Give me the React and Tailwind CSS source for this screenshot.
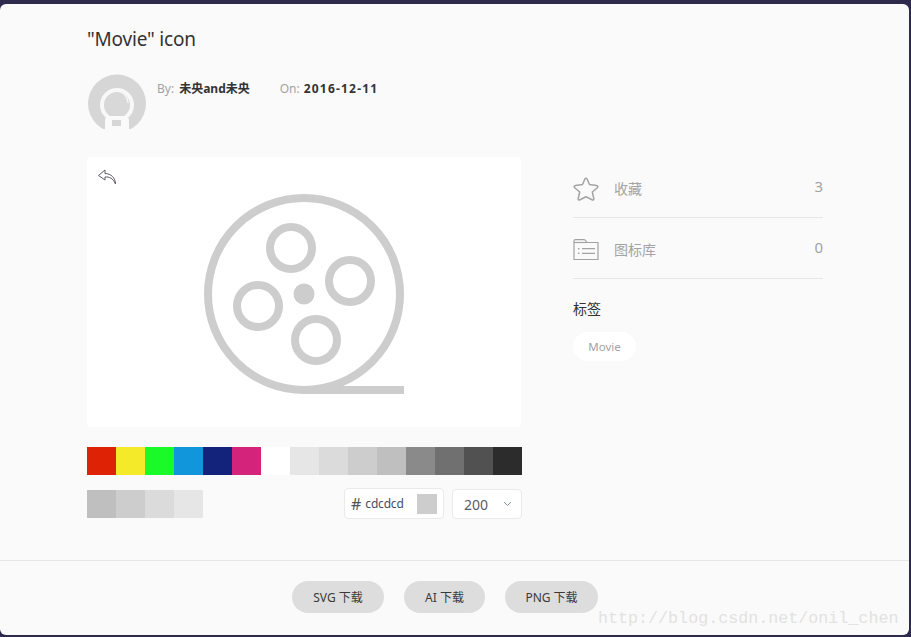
import React from 'react'

const font = { fontFamily: '"Noto Sans", "Noto Sans CJK SC", sans-serif' }

const colors = ['bg-[#dd2206]', 'bg-[#f4ea2a]', 'bg-[#1afa29]', 'bg-[#1296db]', 'bg-[#13227a]', 'bg-[#d4237a]', 'bg-[#ffffff]', 'bg-[#e6e6e6]', 'bg-[#dbdbdb]', 'bg-[#cdcdcd]', 'bg-[#bfbfbf]', 'bg-[#8a8a8a]', 'bg-[#707070]', 'bg-[#515151]', 'bg-[#2c2c2c]']
const recent = ['bg-[#bfbfbf]', 'bg-[#cdcdcd]', 'bg-[#dbdbdb]', 'bg-[#e6e6e6]']

function Avatar() {
  return (
    <svg width="58" height="58" viewBox="0 0 58 58" className="ml-[1px] shrink-0">
      <circle cx="29" cy="29.5" r="29" fill="#d6d6d6" />
      <rect x="0" y="55" width="58" height="3" fill="#fafafa" />
      <circle cx="29" cy="31" r="15" fill="#d8d8d8" stroke="#f8f8f8" strokeWidth="4" />
      <path d="M32 17.5A13 13 0 0 1 40 29" fill="none" stroke="#f4f4f4" strokeWidth="1.5" />
      <path d="M17 58V47Q17 42 22 42H36Q41 42 41 47V58Z" fill="#fafafa" />
      <rect x="24" y="46" width="9" height="6" fill="#d6d6d6" />
    </svg>
  )
}

function MovieIcon() {
  return (
    <svg width="200" height="200" viewBox="0 0 200 200" fill="none" stroke="#cdcdcd" strokeWidth="8">
      <circle cx="100" cy="100" r="96" />
      <circle cx="87" cy="54" r="21" />
      <circle cx="146" cy="87" r="21" />
      <circle cx="54" cy="112" r="21" />
      <circle cx="112" cy="146" r="21" />
      <circle cx="100" cy="100" r="10.5" fill="#cdcdcd" stroke="none" />
      <path d="M100 196H200" />
    </svg>
  )
}

function BackIcon() {
  return (
    <svg width="20" height="16" viewBox="0 0 20 16" fill="none" stroke="#5f5868" strokeWidth="1">
      <path d="M8 1L1.5 6.5L8 11V8C12 7.6 16 9 18.5 15C18.5 9 14 4.5 8 4.5Z" strokeLinejoin="round" />
    </svg>
  )
}

function StarIcon() {
  return (
    <svg width="26" height="24" viewBox="0 0 26 24" fill="none" stroke="#a3a3a3" strokeWidth="1.5" strokeLinejoin="round">
      <path d="M11.8 2.2Q13 .4 14.2 2.2L16.5 7.5L23.5 8.5Q25.8 9 24.3 10.8L19.3 15L20.8 21.5Q21 23.5 19 22.7L13 19.8L7 22.7Q5 23.5 5.2 21.5L6.7 15L1.7 10.8Q.2 9 2.5 8.5L9.5 7.5Z" />
    </svg>
  )
}

function FolderIcon() {
  return (
    <svg width="26" height="22" viewBox="0 0 26 22" fill="none" stroke="#a3a3a3" strokeWidth="1.2">
      <path d="M1 20.5V2Q1 .7 2.5 .7H11Q12.5 .7 14 3.5H25V20.5Z" />
      <path d="M1 3.5H14" />
      <path d="M5 9.7H6.5M5 14.3H6.5" strokeWidth="1.5" />
      <path d="M9 9.7H22M9 14.3H22" />
    </svg>
  )
}

function StatRow({ icon, label, count }) {
  return (
    <div className="flex h-[61px] items-center border-b border-[#e6e6e6] pt-[4px]">
      <div className="flex w-[41px] justify-start">{icon}</div>
      <span className="mb-[2px] flex-1 text-[14px] text-[#a3a3a3]">{label}</span>
      <span className="mb-[5px] text-[15px] text-[#a3a3a3]">{count}</span>
    </div>
  )
}

function DownloadBtn({ label, className }) {
  return (
    <button className={`h-[32px] rounded-full bg-[#dddddd] pt-[1px] text-[12px] text-[#3a3a3a] ${className}`}>{label}</button>
  )
}

export default function App() {
  return (
    <div className="relative h-[637px] w-[911px] overflow-hidden bg-[#2d2a4e] pt-[4px] pr-[2px] pb-[2px]" style={font}>
      <div className="flex h-full flex-col rounded-[6px] bg-[#fafafa]">
        {/* Main */}
        <div className="h-[557px] border-b border-[#e6e6e6] pt-[20px] pl-[87px]">
          <h1 className="text-[19px] leading-[30px] tracking-[-0.2px] text-[#333333]">"Movie" icon</h1>

          <div className="mt-[20px] flex h-[83px]">
            <Avatar />
            <div className="ml-[11px] flex h-[30px] text-[12px] leading-[30px]">
              <span className="text-[#a3a3a3]">By:</span>
              <span className="ml-[5px] font-bold text-[#333333]">未央and未央</span>
              <span className="ml-[30px] text-[#a3a3a3]">On:</span>
              <span className="ml-[4px] font-bold tracking-[1.2px] text-[#333333]">2016-12-11</span>
            </div>
          </div>

          <div className="flex">
            {/* Left */}
            <div className="w-[435px]">
              <div className="relative flex h-[270px] w-[434px] justify-center rounded-[4px] bg-white pt-[37px]">
                <div className="absolute top-[12px] left-[10px]"><BackIcon /></div>
                <MovieIcon />
              </div>
              <div className="mt-[20px] flex">
                {colors.map((c) => <div key={c} className={`h-[28px] w-[29px] ${c}`} />)}
              </div>
              <div className="mt-[13px] flex items-start justify-between">
                <div className="mt-[2px] flex">
                  {recent.map((c) => <div key={c} className={`h-[28px] w-[29px] ${c}`} />)}
                </div>
                <div className="flex gap-[8px]">
                  <div className="flex h-[31px] w-[100px] items-center rounded-[4px] border border-[#eaeaea] bg-white pl-[6px]">
                    <span className="text-[16px] leading-none text-[#555555]">#</span>
                    <span className="ml-[4px] w-[50px] text-[12px] tracking-[-0.2px] text-[#444c66]">cdcdcd</span>
                    <div className="ml-[2px] h-[20px] w-[20px] bg-[#cdcdcd]" />
                  </div>
                  <div className="mt-[1px] flex h-[30px] w-[70px] items-center rounded-[4px] border border-[#eaeaea] bg-white pl-[11px]">
                    <span className="text-[14px] text-[#555e70]">200</span>
                    <svg width="9" height="6" viewBox="0 0 9 6" fill="none" stroke="#8a93a3" strokeWidth="1" className="ml-[15px]">
                      <path d="M1 1L4.5 4.5L8 1" />
                    </svg>
                  </div>
                </div>
              </div>
            </div>

            {/* Right */}
            <div className="ml-[51px] w-[250px]">
              <StatRow icon={<StarIcon />} label="收藏" count="3" />
              <StatRow icon={<FolderIcon />} label="图标库" count="0" />
              <div className="mt-[18px] text-[14px] leading-[24px] text-[#333333]">标签</div>
              <div className="mt-[11px] flex h-[29px] w-[63px] items-center justify-center rounded-full bg-white text-[11.5px] text-[#a3a3a3]">Movie</div>
            </div>
          </div>
        </div>

        {/* Footer */}
        <div className="flex justify-center gap-[20px] pt-[20px] pr-[19px]">
          <DownloadBtn label="SVG 下载" className="w-[92px]" />
          <DownloadBtn label="AI 下载" className="w-[81px]" />
          <DownloadBtn label="PNG 下载" className="w-[93px]" />
        </div>
      </div>
      <div className="absolute top-[607px] left-[598px] text-[16.7px] leading-[24px] text-[#e2e2e2]" style={{ fontFamily: '"Liberation Mono", monospace' }}>http://blog.csdn.net/onil_chen</div>
    </div>
  )
}
